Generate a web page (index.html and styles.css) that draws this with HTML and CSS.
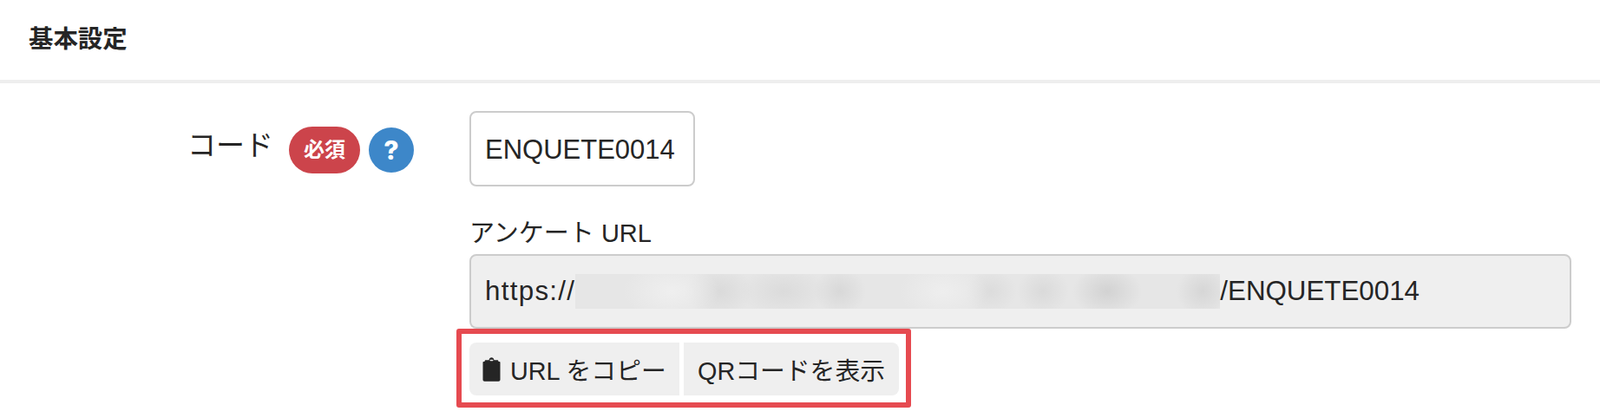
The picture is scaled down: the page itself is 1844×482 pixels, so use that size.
FILE: index.html
```html
<!DOCTYPE html>
<html lang="ja">
<head>
    <meta charset="UTF-8">
    <title>基本設定</title>
    <link rel="stylesheet" href="styles.css">
</head>
<body>
    <div class="section-header">
        <h2 class="section-title">基本設定</h2>
    </div>
    <div class="form-row">
        <div class="form-label">
            <span class="label-text">コード</span>
            <span class="required-badge">必須</span>
            <span class="help-icon">?</span>
        </div>
        <div class="form-field">
            <input class="code-input" type="text" value="ENQUETE0014">
            <div class="url-label">アンケート URL</div>
            <div class="url-box"><span class="url-scheme">https://</span><span class="url-blur"></span>/ENQUETE0014</div>
            <div class="url-actions">
                <button class="action-button first-button">
                    <svg class="clipboard-icon" viewBox="0 0 20 28" width="21" height="28">
                        <path d="M7 3.2C7.3 1.4 8.5 0.3 10 0.3s2.7 1.1 3 2.9h3.6c0.9 0 1.4 0.6 1.4 1.5V6H2V4.7C2 3.8 2.5 3.2 3.4 3.2z" fill="#252525"/>
                        <path d="M1 5h18c0.6 0 1 0.5 1 1.1v19.7c0 1.2-0.8 2-2 2H2c-1.2 0-2-0.8-2-2V6.1C0 5.5 0.4 5 1 5z" fill="#252525"/>
                        <rect x="8" y="2.8" width="4" height="1.4" rx="0.7" fill="#eeeeee"/>
                    </svg>
                    URL をコピー
                </button>
                <button class="action-button last-button">QRコードを表示</button>
            </div>
        </div>
    </div>
</body>
</html>
```

FILE: styles.css
```css
/* Basic Reset */
* {
    margin: 0;
    padding: 0;
    box-sizing: border-box;
}

body {
    font-family: "Liberation Sans", "Noto Sans CJK JP", sans-serif;
    background-color: #ffffff;
    color: #252525;
    height: 482px;
    overflow: hidden;
}

.section-header {
    height: 96px;
    padding: 28px 33px 0;
    border-bottom: 4px solid #eeeeee;
}

.section-title {
    font-size: 28.4px;
    line-height: 34px;
    font-weight: 700;
}

.form-row {
    display: flex;
    padding-top: 32px;
}

.form-label {
    width: 541px;
    display: flex;
    justify-content: flex-end;
    align-items: flex-start;
    padding: 18px 64px 0 0;
}

.label-text {
    font-size: 33px;
    line-height: 44px;
    margin-right: 18px;
}

.required-badge {
    width: 82px;
    height: 54px;
    border-radius: 27px;
    background-color: #cc444b;
    color: #ffffff;
    font-size: 24px;
    font-weight: 700;
    line-height: 54px;
    text-align: center;
    margin-right: 10px;
}

.help-icon {
    width: 52px;
    height: 52px;
    margin-top: 1px;
    border-radius: 50%;
    background-color: #3d87c9;
    color: #ffffff;
    font-family: Inter, sans-serif;
    font-size: 30px;
    font-weight: 800;
    line-height: 52px;
    text-align: center;
}

.form-field {
    width: 1270px;
}

.code-input {
    display: block;
    width: 260px;
    height: 87px;
    padding: 2px 16px 0;
    border: 2px solid #cccccc;
    border-radius: 8px;
    font-family: inherit;
    font-size: 31px;
    color: #252525;
    background-color: #ffffff;
}

.url-label {
    font-size: 29px;
    line-height: 36px;
    margin-top: 36px;
}

.url-box {
    display: flex;
    align-items: center;
    height: 86px;
    margin-top: 6px;
    padding: 0 16px;
    border: 2px solid #cccccc;
    border-radius: 8px;
    background-color: #efefef;
    font-size: 31.3px;
}

.url-scheme {
    letter-spacing: 1.3px;
}

.url-blur {
    display: block;
    width: 743px;
    height: 40px;
    background-color: #e6e6e6;
    background-image:
        radial-gradient(ellipse 55px 34px at 111px 20px, #efefef, transparent),
        radial-gradient(ellipse 50px 34px at 424px 20px, #eeeeee, transparent),
        radial-gradient(ellipse 40px 30px at 166px 20px, #dadada, transparent),
        radial-gradient(ellipse 50px 30px at 240px 20px, #dbdbdb, transparent),
        radial-gradient(ellipse 30px 28px at 305px 20px, #d8d8d8, transparent),
        radial-gradient(ellipse 30px 26px at 479px 20px, #dcdcdc, transparent),
        radial-gradient(ellipse 30px 28px at 539px 20px, #dadada, transparent),
        radial-gradient(ellipse 40px 30px at 613px 20px, #d2d2d2, transparent),
        radial-gradient(ellipse 30px 30px at 723px 20px, #d6d6d6, transparent);
}

.url-actions {
    display: flex;
    width: 524px;
    margin-left: -15px;
    padding: 10px 8px 8px 9px;
    border: 6px solid #e64a50;
    border-radius: 3px;
}

.action-button {
    display: flex;
    align-items: center;
    height: 61px;
    border: none;
    background-color: #efefef;
    color: #252525;
    font-family: inherit;
    font-size: 28.8px;
    white-space: nowrap;
}

.first-button {
    width: 242px;
    padding-left: 15px;
    border-radius: 8px 0 0 8px;
    margin-right: 5px;
}

.last-button {
    width: 248px;
    padding-left: 16px;
    border-radius: 0 8px 8px 0;
}

.clipboard-icon {
    margin-right: 11px;
}
```
